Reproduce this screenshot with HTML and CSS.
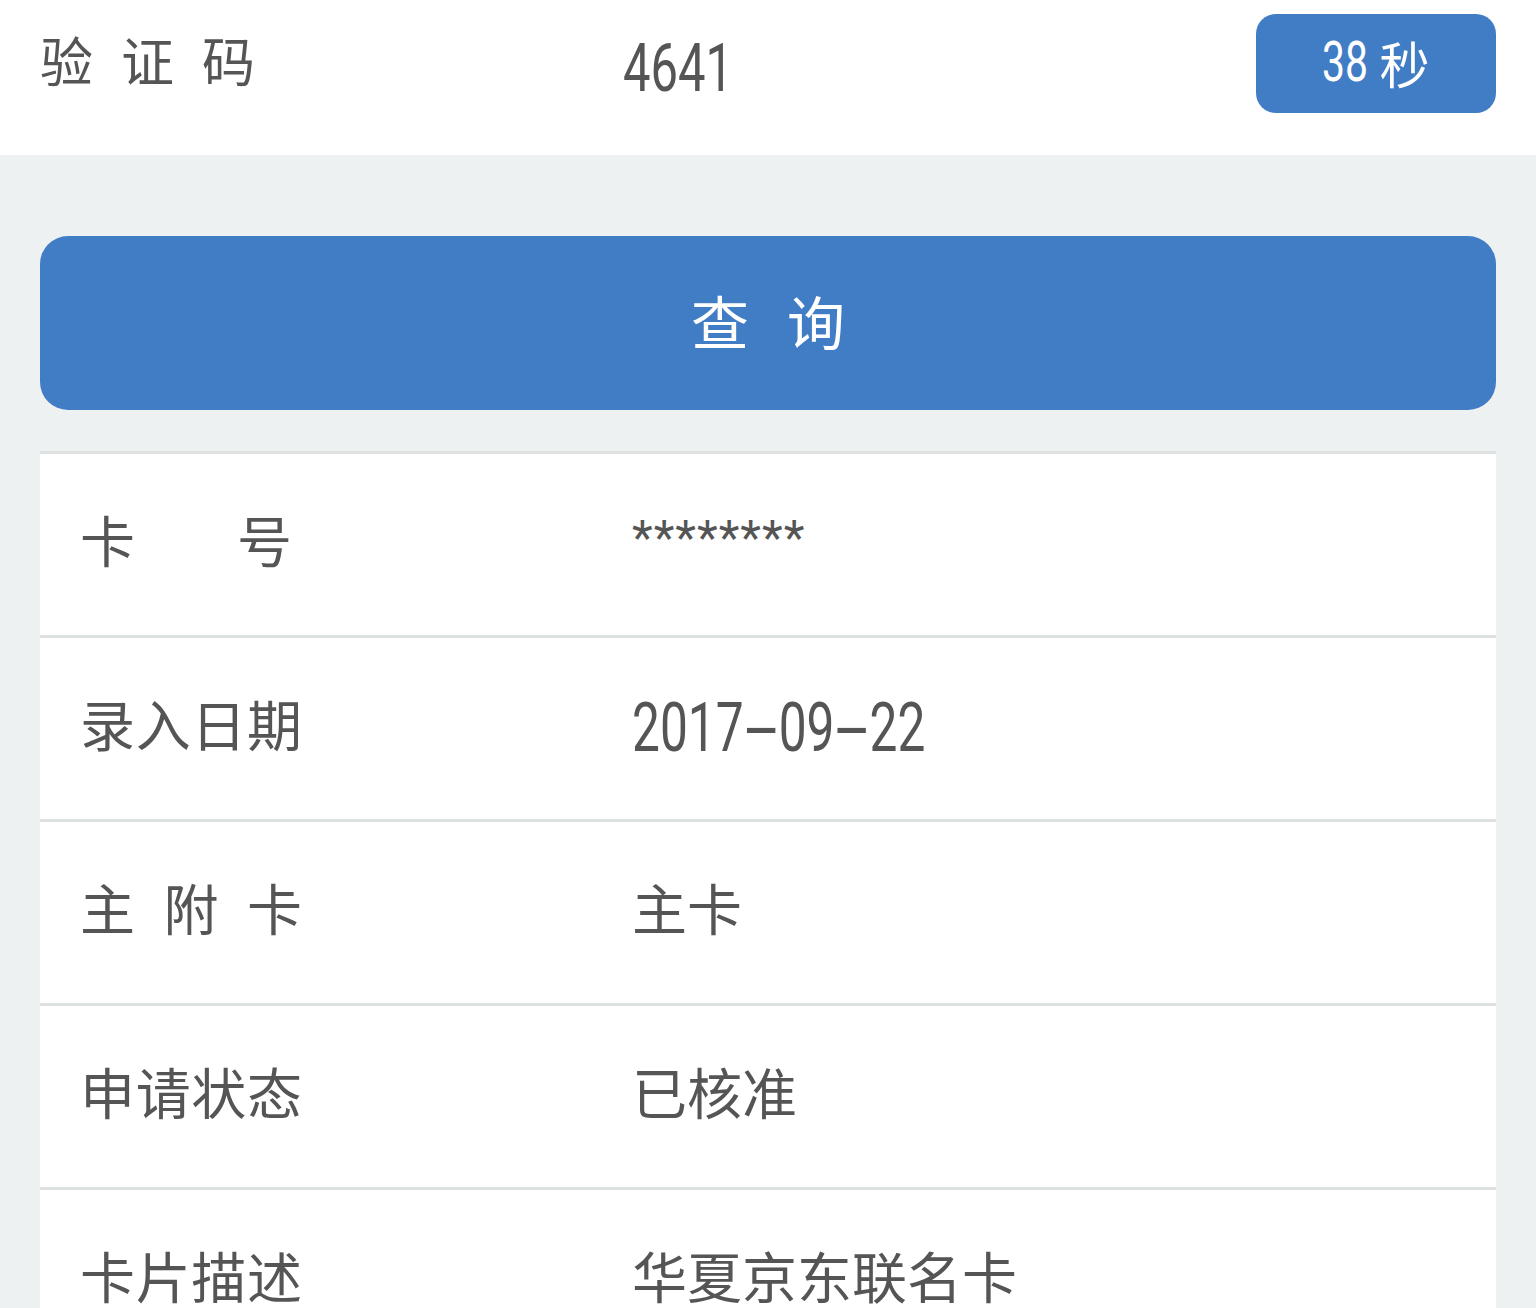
FILE: index.html
```html
<!DOCTYPE html>
<html lang="zh-CN">
<head>
    <meta charset="UTF-8">
    <meta name="viewport" content="width=device-width, initial-scale=1.0">
    <title>卡片查询</title>
    <link rel="stylesheet" href="styles.css">
</head>
<body>

    <!-- Verification code bar -->
    <div class="code-bar">
        <span class="code-label">验证码</span>
        <span class="code-value"><span class="num">4641</span></span>
        <button class="timer-button"><span class="num">38</span> 秒</button>
    </div>

    <!-- Query button -->
    <div class="query-wrap">
        <button class="query-button">查询</button>
    </div>

    <!-- Result list -->
    <div class="result-list">
        <div class="result-row">
            <span class="row-label label-short">卡号</span>
            <span class="row-value stars">********</span>
        </div>
        <div class="result-row">
            <span class="row-label">录入日期</span>
            <span class="row-value date"><span class="num">2017<span class="dash">-</span>09<span class="dash">-</span>22</span></span>
        </div>
        <div class="result-row">
            <span class="row-label">主附卡</span>
            <span class="row-value">主卡</span>
        </div>
        <div class="result-row">
            <span class="row-label">申请状态</span>
            <span class="row-value">已核准</span>
        </div>
        <div class="result-row">
            <span class="row-label">卡片描述</span>
            <span class="row-value">华夏京东联名卡</span>
        </div>
    </div>

</body>
</html>
```

FILE: styles.css
```css
/* Basic Styling */
html, body {
    margin: 0;
    padding: 0;
    background-color: #eef1f1;
    color: #555555;
    font-family: "Noto Sans CJK SC", "Noto Sans", sans-serif;
}

/* Condensed digits */
.num {
    display: inline-block;
    font-family: Roboto, "Noto Sans", sans-serif;
    transform: scaleX(0.73);
    transform-origin: left center;
}

/* Wide dash between date parts */
.dash {
    display: inline-block;
    width: 48px;
    text-align: center;
    transform: scaleX(2.4);
}

/* Top bar */
.code-bar {
    background: #ffffff;
    height: 155px;
    display: flex;
    align-items: center;
    padding: 0 40px 0 40px;
}

.code-label {
    width: 215px;
    font-size: 53px;
    text-align: justify;
    text-align-last: justify;
    margin-top: -38px;
}

.code-value {
    flex: 1;
    margin-left: 368px;
    font-size: 67px;
    line-height: 1;
    margin-top: -26px;
}

.timer-button {
    width: 240px;
    height: 99px;
    margin-top: -28px;
    background: #417dc4;
    color: #ffffff;
    border: none;
    border-radius: 20px;
    font-family: "Noto Sans CJK SC", sans-serif;
    font-size: 50px;
    padding: 0 0 4px;
    display: flex;
    align-items: center;
    justify-content: center;
    white-space: pre;
}

.timer-button .num {
    font-size: 56px;
    width: 46px;
}

/* Query button */
.query-wrap {
    padding: 81px 40px 41px;
}

.query-button {
    display: block;
    width: 100%;
    height: 174px;
    background: #417dc4;
    color: #ffffff;
    border: none;
    border-radius: 28px;
    font-family: "Noto Sans CJK SC", sans-serif;
    font-size: 58px;
    letter-spacing: 38px;
    text-indent: 38px;
    padding: 0 0 6px;
}

/* Result rows */
.result-list {
    margin: 0 40px;
}

.result-row {
    display: flex;
    align-items: center;
    height: 167px;
    padding: 0 0 14px 40px;
    background: #ffffff;
    border-top: 3px solid #dde2e0;
    font-size: 55px;
}

.row-label {
    width: 222px;
    text-align: justify;
    text-align-last: justify;
    margin-right: 330px;
}

.label-short {
    width: 212px;
    margin-right: 340px;
}

.row-value {
    flex: 1;
}

.row-value .num {
    font-size: 68px;
}

.date {
    margin-top: 12px;
}

.stars {
    font-family: Roboto, sans-serif;
    font-size: 48px;
    letter-spacing: 1px;
    margin-top: 0;
}
```
